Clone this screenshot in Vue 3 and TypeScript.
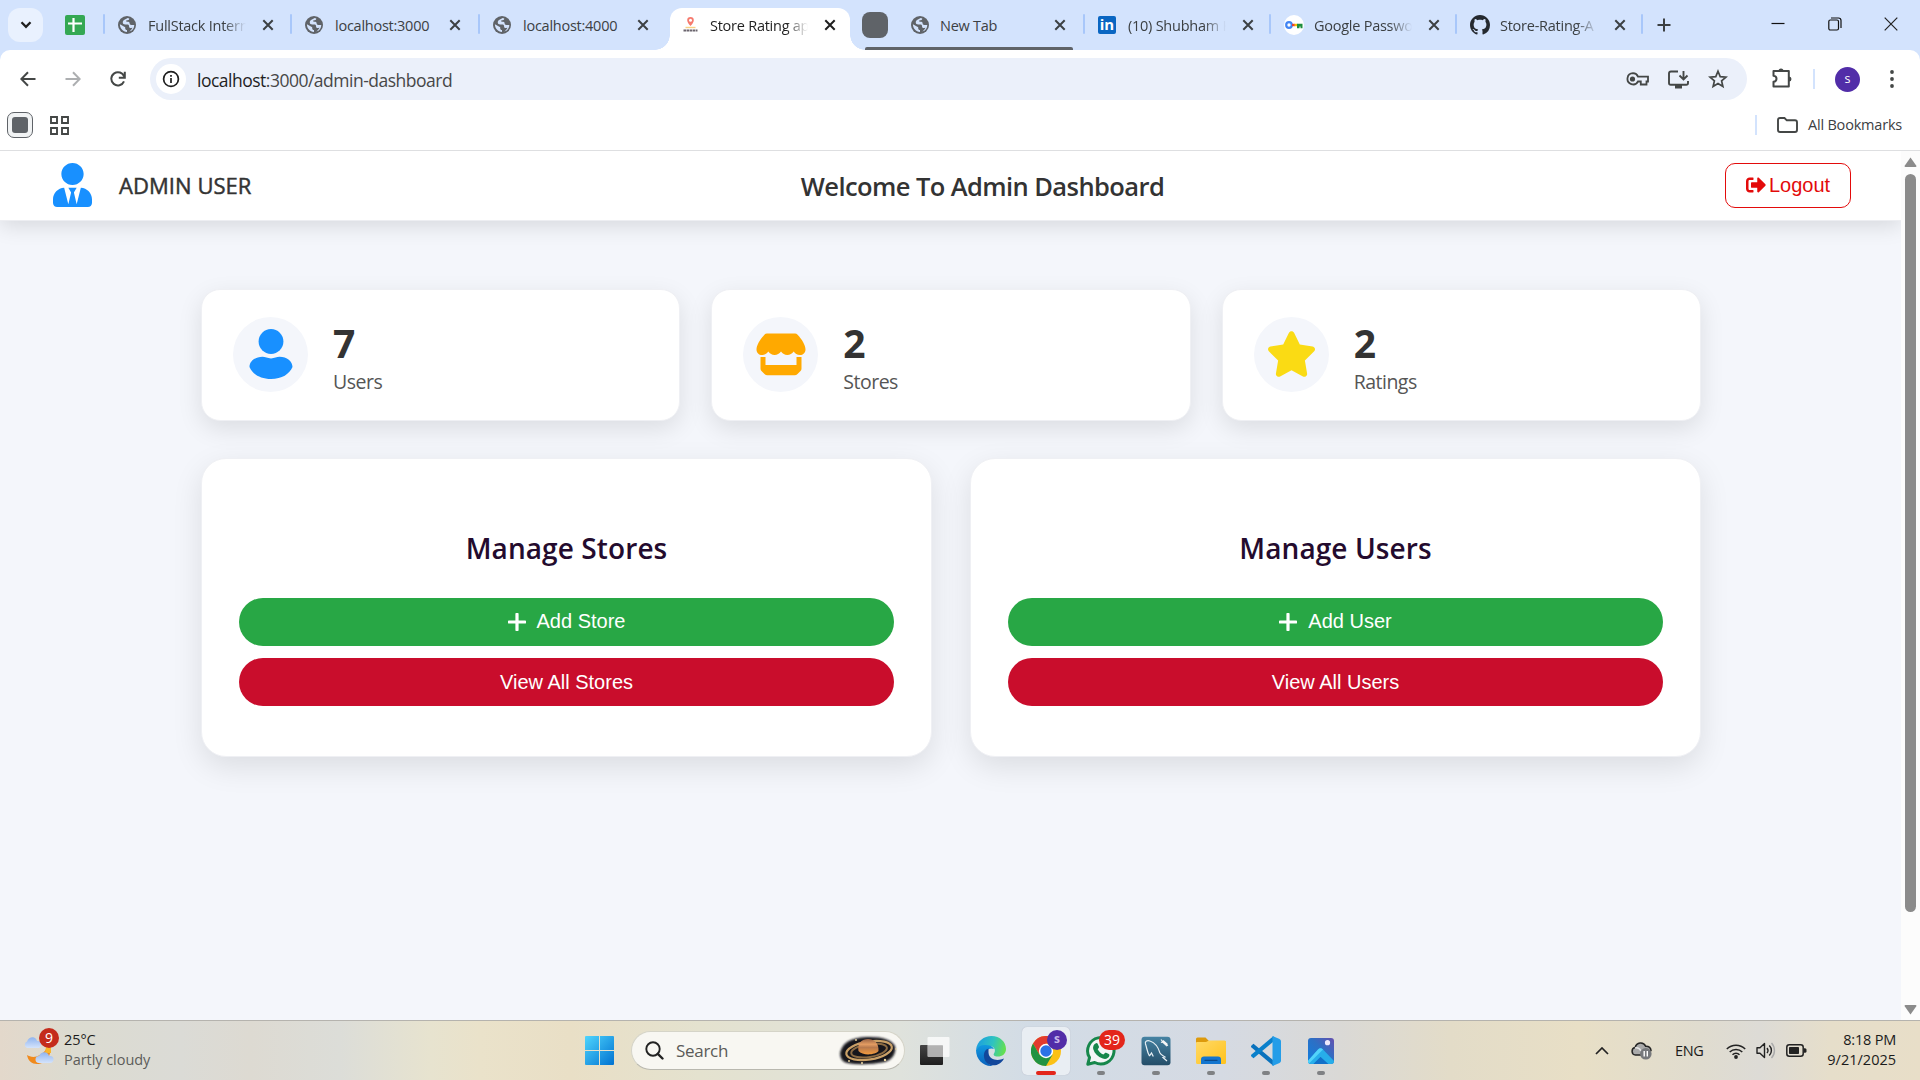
<script setup lang="ts">
type IconKind = 'globe' | 'linkedin' | 'key' | 'github' | 'pin'

interface Tab {
  title: string
  icon: IconKind
  active?: boolean
  chip?: boolean
  faded?: boolean
}

interface Stat {
  kind: 'users' | 'stores' | 'ratings'
  value: number
  label: string
}

interface Panel {
  title: string
  add: string
  view: string
}

const tabs: Tab[] = [
  { title: 'FullStack Intern', icon: 'globe', faded: true },
  { title: 'localhost:3000', icon: 'globe' },
  { title: 'localhost:4000', icon: 'globe' },
  { title: 'Store Rating ap', icon: 'pin', active: true, faded: true },
  { title: 'New Tab', icon: 'globe', chip: true },
  { title: '(10) Shubham K', icon: 'linkedin', faded: true },
  { title: 'Google Passwo', icon: 'key', faded: true },
  { title: 'Store-Rating-A', icon: 'github', faded: true },
]

const stats: Stat[] = [
  { kind: 'users', value: 7, label: 'Users' },
  { kind: 'stores', value: 2, label: 'Stores' },
  { kind: 'ratings', value: 2, label: 'Ratings' },
]

const panels: Panel[] = [
  { title: 'Manage Stores', add: 'Add Store', view: 'View All Stores' },
  { title: 'Manage Users', add: 'Add User', view: 'View All Users' },
]
</script>

<template>
  <div class="screen">
    <div class="tabstrip">
      <div class="cell-start">
        <button class="tab-search">
          <svg width="12" height="8" viewBox="0 0 12 8"><path d="M1.5 1.3 6 5.8l4.500-4.500" fill="none" stroke="#1f1f1f" stroke-width="2.300" /></svg>
        </button>
      </div>
      <div class="pinned">
        <svg width="20" height="20" viewBox="0 0 20 20"><rect width="20" height="20" rx="2" fill="#34a853" /><path d="M8.500 3v14M3 8.500h14" stroke="#fff" stroke-width="2.200" /></svg>
        <i class="sep"></i>
      </div>
      <template v-for="tab in tabs" :key="tab.title">
        <div v-if="tab.chip" class="chip-cell"><span class="chip"></span></div>
        <div class="tab" :class="{ active: tab.active, grouped: tab.chip }">
          <svg v-if="tab.icon === 'globe'" class="fav" viewBox="2 2 20 20"><circle cx="12" cy="12" r="10" fill="#5f6368" /><path d="M4.100 11.200c.1 4.600 3.400 8.300 7.900 8.700v-2.300c-1.200 0-2-.8-2-2v-1zM12.800 4.100l-3.600 2c-1.400.8-2 2-1.900 3.200.1 1.500 1.200 2.200 2.700 2.200h2.200c1.500 0 2.100.7 2.100 2.100 0 1.200.9 1.700 2.100 1.700l1.700-.2c-.7 1.700-2 3.200-3.600 4.100 3.500-.9 5.600-3.800 5.600-7.300h-3.200c-1.400 0-2-.7-2-1.900 0-1.100-.8-1.700-2.100-1.700h-1.500V6.700h1.500c1.100 0 1.700-.8 1.700-1.800z" fill="#d3e3fd" /></svg>
          <svg v-else-if="tab.icon === 'pin'" class="fav" viewBox="0 0 18 18"><path d="M8.500 10C6.500 7.700 5.200 6 5.200 4.200a3.300 3.300 0 0 1 6.600 0C11.800 6 10.500 7.700 8.500 10z" fill="#f67a6e" /><circle cx="8.500" cy="4.200" r="1.500" fill="#fff" /><path d="M3.500 11.500h10" stroke="#f8d184" stroke-width="1.400" /><path d="M1.500 14.500h14" stroke="#6b656e" stroke-width="2" stroke-dasharray="2.600 .5" /></svg>
          <span v-else-if="tab.icon === 'linkedin'" class="fav linkedin">in</span>
          <svg v-else-if="tab.icon === 'key'" class="fav wide" viewBox="0 0 20 20"><circle cx="10" cy="10" r="10" fill="#fff" /><circle cx="5" cy="10" r="2.800" fill="none" stroke="#4285f4" stroke-width="2.200" /><path d="M8 10h3" stroke="#ea4335" stroke-width="2.400" /><path d="M10.500 10h3" stroke="#fbbc04" stroke-width="2.400" /><path d="M13 8.800h5.500v4.500h-2v-1.800h-1v1.800H13z" fill="#1e8e3e" /></svg>
          <svg v-else class="fav wide" viewBox="0 0 16 16"><path fill="#24292f" d="M8 0C3.580 0 0 3.580 0 8c0 3.540 2.290 6.530 5.470 7.590.4.07.55-.17.55-.38 0-.19-.01-.82-.01-1.490-2.010.37-2.530-.49-2.690-.94-.09-.23-.48-.94-.82-1.130-.28-.15-.68-.52-.01-.53.63-.01 1.080.58 1.230.82.72 1.210 1.870.87 2.330.66.07-.52.28-.87.51-1.070-1.780-.2-3.640-.89-3.640-3.950 0-.87.31-1.590.82-2.150-.08-.2-.36-1.020.08-2.120 0 0 .67-.21 2.200.82.64-.18 1.320-.27 2-.27s1.360.09 2 .27c1.530-1.040 2.200-.82 2.200-.82.44 1.100.16 1.920.08 2.120.51.56.82 1.270.82 2.150 0 3.070-1.870 3.750-3.650 3.950.29.25.54.73.54 1.480 0 1.070-.01 1.930-.01 2.200 0 .21.15.46.55.38A8.010 8.010 0 0 0 16 8c0-4.420-3.580-8-8-8z" /></svg>
          <span class="tab-title" :class="{ faded: tab.faded }">{{ tab.title }}</span>
          <svg class="tab-close" width="12" height="12" viewBox="0 0 12 12"><path d="M1.300 1.300l9.400 9.400M10.700 1.300l-9.400 9.400" stroke="currentColor" stroke-width="2" /></svg>
          <i v-if="!tab.active && tab.title !== 'localhost:4000'" class="sep"></i>
        </div>
      </template>
      <div class="new-tab"><svg width="14" height="14" viewBox="0 0 14 14"><path d="M7 .5v13M.5 7h13" stroke="#3c4043" stroke-width="2" /></svg></div>
      <div class="win-controls">
        <svg width="14" height="14" viewBox="0 0 14 14"><path d="M.5 6.500h13" stroke="#111" stroke-width="1.200" /></svg>
        <svg width="14" height="14" viewBox="0 0 14 14"><rect x=".8" y="3" width="9.700" height="10" rx="1.500" fill="none" stroke="#111" stroke-width="1.200" /><path d="M3 1h7.500Q13 1 13 3.500V11" fill="none" stroke="#111" stroke-width="1.200" /></svg>
        <svg width="14" height="14" viewBox="0 0 14 14"><path d="M.7.7l12.600 12.600M13.300.7.7 13.300" stroke="#222" stroke-width="1.200" /></svg>
      </div>
    </div>

    <div class="chrome">
      <div class="toolbar">
        <div class="nav">
          <svg width="16" height="16" viewBox="0 0 16 16"><path d="M15.500 8H1.500M8 1.200 1.300 8 8 14.800" fill="none" stroke="#444746" stroke-width="2" /></svg>
          <svg width="16" height="16" viewBox="0 0 16 16"><path d="M.5 8h14M8 1.200 14.700 8 8 14.800" fill="none" stroke="#adafb1" stroke-width="2" /></svg>
          <svg width="16" height="16" viewBox="0 0 16 16"><path d="M14 10.300A6.600 6.600 0 1 1 14.200 5.800" fill="none" stroke="#444746" stroke-width="2" /><path d="M14.800.8v6h-6" fill="none" stroke="#444746" stroke-width="2" /></svg>
        </div>
        <div class="omnibox">
          <span class="site-info"><svg width="18" height="18" viewBox="0 0 18 18"><circle cx="9" cy="9" r="7.400" fill="none" stroke="#1f1f1f" stroke-width="1.700" /><path d="M9 8v5M9 5v1.800" stroke="#1f1f1f" stroke-width="1.700" /></svg></span>
          <span class="url"><b>localhost</b>:3000/admin-dashboard</span>
          <div class="omni-icons">
            <svg width="23" height="16" viewBox="0 0 23 16"><path d="M7 2.200a5.600 5.600 0 1 0 5 8.300h2.800v3h5.700v-3H22V5.700H12A5.600 5.600 0 0 0 7 2.200z" fill="none" stroke="#444746" stroke-width="1.800" /><circle cx="6.500" cy="8" r="2.600" fill="#444746" /></svg>
            <svg width="21" height="19" viewBox="0 0 21 19"><path d="M10 1.500H3Q1 1.500 1 3.500v9.500q0 1.800 1.800 1.800h15.400q1.800 0 1.800-1.800v-2" fill="none" stroke="#444746" stroke-width="1.900" /><path d="M7 15h7v3.500H7z" fill="#444746" /><path d="M15.500 1v8M11.500 5.500l4 4 4-4" fill="none" stroke="#444746" stroke-width="1.900" /></svg>
            <svg width="20" height="20" viewBox="0 0 20 20"><path d="M10 2.200 12.200 7.600 18 8.100 13.600 11.900 14.900 17.500 10 14.500 5.100 17.500 6.400 11.900 2 8.100 7.800 7.600z" fill="none" stroke="#444746" stroke-width="1.700" /></svg>
          </div>
        </div>
        <svg class="puzzle" width="22" height="22" viewBox="0 0 22 22"><path d="M2.500 4h15.300v15.500H2.500v-4.700c4-.4 4-5.700 0-6.100z" fill="none" stroke="#444746" stroke-width="2" stroke-linejoin="round" /><path d="M7.500 4a2.500 2.500 0 0 1 5 0zM18 9.400a2.500 2.500 0 0 1 0 5z" fill="#444746" /></svg>
        <i class="bar-sep"></i>
        <span class="profile">s</span>
        <svg class="dots" width="4" height="20" viewBox="0 0 4 20"><circle cx="2" cy="3" r="1.900" fill="#444746" /><circle cx="2" cy="10" r="1.900" fill="#444746" /><circle cx="2" cy="17" r="1.900" fill="#444746" /></svg>
      </div>
      <div class="bookmarks">
        <span class="saved-group"><i></i></span>
        <svg class="apps" width="19" height="19" viewBox="0 0 19 19"><path d="M1 1h6v6H1zM12 1h6v6h-6zM1 12h6v6H1zM12 12h6v6h-6z" fill="none" stroke="#444746" stroke-width="1.900" /></svg>
        <i class="bar-sep book-sep"></i>
        <svg width="21" height="16" viewBox="0 0 21 16"><path d="M1 13V3Q1 1 3 1h4.500l2.300 2.300H18q2 0 2 2V13q0 2-2 2H3q-2 0-2-2z" fill="none" stroke="#444746" stroke-width="1.900" /></svg>
        <span class="book-text">All Bookmarks</span>
      </div>
    </div>

    <div class="viewport">
      <div class="page">
        <header class="header">
          <div class="admin">
            <svg width="39" height="44" viewBox="0 0 448 512" preserveAspectRatio="none"><path fill="#1890ff" d="M224 256c70.700 0 128-57.300 128-128S294.700 0 224 0 96 57.300 96 128s57.300 128 128 128zm95.800 32.600L272 480l-32-136 32-56h-96l32 56-32 136-47.800-191.400C56.900 292 0 350.300 0 422.400V464c0 26.500 21.500 48 48 48h352c26.500 0 48-21.500 48-48v-41.600c0-72.100-56.900-130.400-128.200-133.800z" /></svg>
            <span>ADMIN USER</span>
          </div>
          <h1>Welcome To Admin Dashboard</h1>
          <button class="logout">
            <svg width="20" height="20" viewBox="0 0 512 512"><path fill="currentColor" d="M497 273L329 441c-15 15-41 4.500-41-17v-96H152c-13.300 0-24-10.700-24-24v-96c0-13.300 10.700-24 24-24h136V88c0-21.400 25.900-32 41-17l168 168c9.300 9.400 9.300 24.600 0 34zM192 436v-40c0-6.600-5.400-12-12-12H96c-17.700 0-32-14.300-32-32V160c0-17.700 14.300-32 32-32h84c6.600 0 12-5.400 12-12V76c0-6.600-5.400-12-12-12H96c-53 0-96 43-96 96v192c0 53 43 96 96 96h84c6.600 0 12-5.400 12-12z" /></svg>
            <span>Logout</span>
          </button>
        </header>

        <main class="content">
          <section class="stats">
            <article v-for="stat in stats" :key="stat.kind" class="stat">
              <div class="stat-icon">
                <svg v-if="stat.kind === 'users'" width="44" height="50" viewBox="0 0 44 50"><circle cx="22" cy="12.500" r="12.400" fill="#1890ff" /><path d="M13.500 27.800c2.700 0 5 1.600 8.500 1.600s5.800-1.600 8.500-1.600c7.500 0 13 4.500 13 10.200C40.500 45 33 50 22 50S3.500 45 .5 38c0-5.700 5.500-10.200 13-10.200z" fill="#1890ff" /></svg>
                <svg v-else-if="stat.kind === 'stores'" width="50" height="43" viewBox="0 0 50 43"><path d="M11 .5h28q1.500 0 2.600 1.200C46 6.500 49.500 12 49.500 16.500c0 3.500-2.600 5.500-5.500 5.500-3 0-4.700-1.400-6.300-3.400-1.700 2-3.700 3.400-6.400 3.400s-4.600-1.400-6.300-3.400c-1.700 2-3.700 3.400-6.400 3.400s-4.600-1.400-6.300-3.400c-1.600 2-3.400 3.400-6.300 3.400-3 0-5.500-2-5.500-5.500C.5 12 4 6.500 8.400 1.700Q9.500.5 11 .5z" fill="#ffa900" /><path d="M4.500 24h5v8h31v-8h5v11.500q0 1.500-1 2.600l-3 3q-1.200 1.200-2.900 1.200H11.400q-1.700 0-2.900-1.200l-3-3q-1-1.100-1-2.600z" fill="#ffa900" /></svg>
                <svg v-else width="47" height="46" viewBox="24 0 528 512"><path fill="#fadb14" d="M316.900 18C311.600 7 300.400 0 288.100 0s-23.400 7-28.800 18L195 150.300 51.400 171.500c-12 1.800-22 10.200-25.700 21.700s-.7 24.200 7.900 32.700L137.800 329 113.200 474.700c-2 12 3 24.200 12.900 31.300s23 8 33.800 2.300l128.300-68.500 128.300 68.500c10.800 5.700 23.900 4.900 33.800-2.300s14.900-19.300 12.900-31.300L438.500 329 542.700 225.900c8.600-8.500 11.700-21.200 7.900-32.700s-13.700-19.900-25.700-21.700L381.200 150.300 316.900 18z" /></svg>
              </div>
              <div class="stat-text">
                <strong>{{ stat.value }}</strong>
                <span>{{ stat.label }}</span>
              </div>
            </article>
          </section>
          <section class="panels">
            <article v-for="panel in panels" :key="panel.title" class="panel">
              <h2>{{ panel.title }}</h2>
              <button class="action add">
                <svg width="18" height="18" viewBox="0 0 18 18"><path d="M9 1.200v15.600M1.200 9h15.600" stroke="#fff" stroke-width="3.200" stroke-linecap="round" /></svg>
                <span>{{ panel.add }}</span>
              </button>
              <button class="action view">{{ panel.view }}</button>
            </article>
          </section>
        </main>
      </div>
      <div class="scrollbar">
        <svg width="13" height="10" viewBox="0 0 13 10"><path d="M6.500.5 12.500 9Q12.500 10 11.500 10h-10Q.5 10 .5 9z" fill="#8b8b8b" /></svg>
        <div class="thumb"></div>
        <svg class="down" width="13" height="10" viewBox="0 0 13 10"><path d="M6.500 9.500 12.500 1Q12.500 0 11.500 0h-10Q.5 0 .5 1z" fill="#8b8b8b" /></svg>
      </div>
    </div>

    <footer class="taskbar">
      <div class="weather">
        <div class="weather-icon">
          <svg width="32" height="32" viewBox="0 0 32 32">
            <defs><linearGradient id="cloud" x1="0" y1="0" x2="0" y2="1"><stop offset="0" stop-color="#8fb4ef" /><stop offset="1" stop-color="#d4e3fb" /></linearGradient></defs>
            <path d="M26 11c2 8-3 18-13 18-5 0-9-3-10-9 3 2 8 3 13 0s7-6 6-10z" fill="#f08a1d" /><path d="M22 12l5-2v8h-6z" fill="#f9b52b" />
            <path d="M3 13a3.500 3.500 0 0 1 0-6.500C5 1 12 1 13 6c4-1 6 5 2 7z" fill="url(#cloud)" />
            <path d="M15 28a3.500 3.500 0 0 1 0-7c2-5 9-5 10 0 6-1 6 7 1 7z" fill="url(#cloud)" />
          </svg>
          <span class="badge nine">9</span>
        </div>
        <div class="weather-text"><span>25°C</span><span class="muted">Partly cloudy</span></div>
      </div>

      <div class="center">
        <svg class="start" width="29" height="29" viewBox="0 0 29 29"><defs><linearGradient id="win" x1="0" y1="0" x2="1" y2="1"><stop offset="0" stop-color="#4fd5fd" /><stop offset="1" stop-color="#0072d1" /></linearGradient></defs><path d="M1 0h13v14H0V1q0-1 1-1zM15 0h13q1 0 1 1v13H15zM0 15h14v14H1q-1 0-1-1zM15 15h14v13q0 1-1 1H15z" fill="url(#win)" /></svg>
        <div class="search">
          <svg width="19" height="19" viewBox="0 0 19 19"><circle cx="8" cy="8" r="6.700" fill="none" stroke="#222" stroke-width="1.900" /><path d="m12.800 12.800 4.700 4.700" stroke="#222" stroke-width="2.400" stroke-linecap="round" /></svg>
          <span>Search</span>
          <svg class="saturn" width="60" height="31" viewBox="0 0 60 31">
            <defs>
              <filter id="soft" x="-20%" y="-20%" width="140%" height="140%"><feGaussianBlur stdDeviation="1.300" /></filter>
              <linearGradient id="planet" x1="0" y1="0" x2="0" y2="1"><stop offset="0" stop-color="#9a6445" /><stop offset=".35" stop-color="#e39c62" /><stop offset=".55" stop-color="#b87a4e" /><stop offset="1" stop-color="#f29a3e" /></linearGradient>
            </defs>
            <path d="M2 18Q5 3 28 2t29 9q2 11-10 16-22 4-38 1Q2 26 2 18z" fill="#17151c" filter="url(#soft)" />
            <g transform="rotate(-9 31 15)"><ellipse cx="31" cy="15.500" rx="23" ry="9" fill="none" stroke="#c9a067" stroke-width="2.200" /><ellipse cx="31" cy="15.500" rx="18" ry="6.500" fill="none" stroke="#8a6a43" stroke-width="2" /></g>
            <path d="M20.500 16C19 8 24 4 30 4s11 4 10.500 12c-3 4-16 5-20 0z" fill="url(#planet)" />
            <g fill="#f3dda5"><circle cx="11" cy="26" r=".9" /><circle cx="24" cy="28" r="1" /><circle cx="47" cy="25" r="1.200" /><circle cx="58" cy="14" r=".8" /><circle cx="18" cy="5" r=".9" /></g>
          </svg>
        </div>
        <svg class="taskview" width="30" height="28" viewBox="0 0 30 28"><defs><linearGradient id="dark" x1="0" y1="0" x2="0" y2="1"><stop offset="0" stop-color="#454545" /><stop offset="1" stop-color="#1e1e1e" /></linearGradient></defs><rect x="0" y="8" width="23" height="20" rx="1" fill="url(#dark)" /><rect x="7.500" y="0" width="22" height="20" rx="1" fill="#fff" fill-opacity=".75" /><path d="M8 8.500h15V20H8z" fill="#888" fill-opacity=".4" /></svg>

        <div class="app">
          <svg width="30" height="30" viewBox="0 0 30 30">
            <defs><linearGradient id="edgeTop" x1="0" y1=".3" x2="1" y2=".5"><stop offset="0" stop-color="#1b9de2" /><stop offset=".55" stop-color="#2fc3c0" /><stop offset="1" stop-color="#65e04e" /></linearGradient><linearGradient id="edgeLow" x1="0" y1="0" x2="0" y2="1"><stop offset="0" stop-color="#1199e0" /><stop offset="1" stop-color="#0b62bd" /></linearGradient></defs>
            <path d="M0 14C1 5 8 0 15.500 0 24 0 30 6 30 13c0 5-4 7.500-8 7.500-4 0-5-1.500-4-3 2.500-4-.5-7.500-5-7.500C7 9 2 11 0 14z" fill="url(#edgeTop)" />
            <path d="M0 14C2 10 6 8.500 10 9c4 0 6.500 1.500 8 4-5-2-9 2-9 7 0 5 4 9 8 9.800C8 31 0 24 0 14z" fill="url(#edgeLow)" />
            <path d="M12.500 12.500C7 14 6.500 22 10.500 26.500 16 32 25 29 28 22.500c-5 2.500-15 2.500-15.500-6 0-2 0-3 0-4z" fill="#12479b" />
          </svg>
        </div>
        <div class="app current">
          <svg width="30" height="30" viewBox="0 0 30 30"><circle cx="15" cy="15" r="15" fill="#fbc116" /><path d="M2 7.500A15 15 0 0 1 28 7.500H15L8.500 18.750z" fill="#e33b2e" /><path d="M2 7.500A15 15 0 0 0 15 30l6.500-11.250L15 15 8.500 18.750z" fill="#229342" /><circle cx="15" cy="15" r="7.200" fill="#fff" /><circle cx="15" cy="15" r="5.700" fill="#2b72e6" /></svg>
          <span class="badge profile-badge">s</span>
          <i class="mark"></i>
        </div>
        <div class="app">
          <svg width="30" height="30" viewBox="0 0 30 30"><path d="M1.800 28.200l1.700-6.600A13.200 13.200 0 1 1 8.700 26.500z" fill="#f3f6f6" stroke="#16874b" stroke-width="3" stroke-linejoin="round" /><path d="M9.500 7.500q1.500-1 2.300.5l1.200 2.700q.3.700-1.300 2.500c1.400 2.700 3.200 4.200 5.700 5.300 1.700-2 2-2 2.700-1.700l2.700 1.300q1 .6.500 2c-1 2.700-4 3.300-6.500 2.400-5-1.700-8.300-5-9.600-9.500-.6-2.500.8-4.700 2.300-5.500z" fill="#16874b" /></svg>
          <span class="badge count">39</span>
          <i class="mark"></i>
        </div>
        <div class="app">
          <svg width="30" height="30" viewBox="0 0 30 30"><defs><linearGradient id="sql" x1="0" y1="0" x2="0" y2="1"><stop offset="0" stop-color="#4683a3" /><stop offset="1" stop-color="#244d68" /></linearGradient></defs><rect x=".5" y=".8" width="29" height="28.500" rx="3" fill="url(#sql)" /><path d="M8.500 20C6 16 6 12 4.500 8c-1-3 2-4 4.500-3 6 2 8.500 7 10 12 1 2 4 3 5 4l-2 .5 4 3.500M8.500 20l2-3 1.800 3.500" fill="none" stroke="#e8f0f5" stroke-width="1.200" /><path d="m21.500 5 4.500 4" stroke="#f5f5f5" stroke-width="2.600" /><path d="m20 3.500 2 2.500M20 6.500l2.500-1M25 10l2-1" stroke="#f5f5f5" stroke-width="1.200" /></svg>
          <i class="mark"></i>
        </div>
        <div class="app">
          <svg width="30" height="28" viewBox="0 0 30 28"><defs><linearGradient id="fold" x1="0" y1="0" x2="1" y2="1"><stop offset="0" stop-color="#ffd967" /><stop offset="1" stop-color="#ffc21d" /></linearGradient></defs><path d="M0 2q0-1.500 1.500-1.500h8L13 4h15.500Q30 4 30 5.500V8H0z" fill="#dd9a0c" /><path d="M0 6q0-1 1-1h9l3-1.500h15.500Q30 3.500 30 5v20.500q0 1.500-1.500 1.500h-27Q0 27 0 25.500z" fill="url(#fold)" /><path d="M5 27v-4.500Q5 19.500 8 19.500h14q3 0 3 3V27z" fill="#1375cf" /><path d="M9 23.300h12" stroke="#0b4a8b" stroke-width="1.300" stroke-linecap="round" /></svg>
          <i class="mark"></i>
        </div>
        <div class="app">
          <svg width="30" height="30" viewBox="0 0 30 30"><path d="m2.500 7.800 20 16.700V30L.5 11.500q-1-1 0-2z" fill="#0a72bd" /><path d="m2.500 22.200 20-16.700V0L.5 18.500q-1 1 0 2z" fill="#0a80cb" /><path d="M21.500 0l7 3q1.500.7 1.500 2.300v19.400q0 1.600-1.500 2.300l-7 3z" fill="#249de8" /></svg>
          <i class="mark"></i>
        </div>
        <div class="app">
          <svg width="26" height="26" viewBox="0 0 26 26"><defs><linearGradient id="pic" x1="0" y1="1" x2="1" y2="0"><stop offset="0" stop-color="#0f7ee0" /><stop offset=".55" stop-color="#2c70c5" /><stop offset="1" stop-color="#6650ae" /></linearGradient><clipPath id="picClip"><rect width="26" height="26" rx="3" /></clipPath></defs><g clip-path="url(#picClip)"><rect width="26" height="26" fill="url(#pic)" /><path d="M-1 24 10 11.500q2.500-2.500 5 0L27 24v3l-6.500 0-8-8-8 8H-1z" fill="#27aeea" /><path d="M-1 24 10 11.500q2.500-2.500 5 0l-15 15z" fill="#53d3fa" /><path d="m12.500 19 9 8h-17z" fill="#1270c9" /></g><circle cx="19.500" cy="4.700" r="2.600" fill="#eee9fb" /></svg>
          <i class="mark"></i>
        </div>
      </div>

      <div class="tray">
        <svg width="14" height="8" viewBox="0 0 14 8"><path d="m1 7 6-6 6 6" fill="none" stroke="#222" stroke-width="1.700" /></svg>
        <svg class="onedrive" width="21" height="19" viewBox="0 0 21 19"><path d="M4.500 14a3.800 3.800 0 0 1-.4-7.500C5.500 1 12.500.3 14.600 5.200 18 5 20 7 20 9.500L13 14z" fill="#aaa" stroke="#252525" stroke-width="1.500" /><path d="M4 7q4-1 6 3" fill="none" stroke="#e6e6e6" stroke-width="1.500" /><circle cx="14.800" cy="12.800" r="5.800" fill="#77797c" /><path d="M13.200 10v5.600M16.300 10v5.600" stroke="#fff" stroke-width="1.400" /></svg>
        <span class="lang">ENG</span>
        <svg class="wifi" width="20" height="16" viewBox="0 0 20 16"><path d="M.8 6a13 13 0 0 1 18.400 0M3.700 9a9 9 0 0 1 12.600 0M6.500 11.800a5 5 0 0 1 7 0" fill="none" stroke="#222" stroke-width="1.500" /><circle cx="10" cy="14" r="1.900" fill="#222" /></svg>
        <svg class="sound" width="20" height="17" viewBox="0 0 20 17"><path d="M1 5.800h3L8.500 1.500v14L4 11.200H1z" fill="none" stroke="#222" stroke-width="1.400" stroke-linejoin="round" /><path d="M11 6a4 4 0 0 1 0 5M13.300 3.500a7 7 0 0 1 0 10" fill="none" stroke="#222" stroke-width="1.400" /><path d="M15.500 1a11 11 0 0 1 0 15" fill="none" stroke="#aaa" stroke-width="1.400" /></svg>
        <svg class="battery" width="21" height="13" viewBox="0 0 21 13"><rect x=".8" y=".8" width="16.400" height="11.400" rx="2.500" fill="none" stroke="#222" stroke-width="1.500" /><rect x="3" y="3" width="10" height="7" rx=".8" fill="#222" /><path d="M18 4.200h1q1.500 0 1.500 1.500v1.600q0 1.500-1.500 1.500h-1z" fill="#222" /></svg>
        <div class="clock"><span>8:18 PM</span><span class="date">9/21/2025</span></div>
      </div>
    </footer>
  </div>
</template>

<style>
body {
  margin: 0;
  overflow: hidden;
}
</style>

<style scoped>
* {
  box-sizing: border-box;
}
svg {
  display: block;
  flex: none;
}
button {
  margin: 0;
  padding: 0;
  border: 0;
}
.screen {
  width: 1920px;
  height: 1080px;
  display: flex;
  flex-direction: column;
  overflow: hidden;
  background: #d3e3fd;
  font-family: "Open Sans", "Noto Sans", sans-serif;
}

/* Tab strip */
.tabstrip {
  height: 50px;
  flex: none;
  display: grid;
  grid-template-columns: 57px 49px 187px 188px 189px 180px 48px 188px 186px 186px 186px 40px 1fr;
}
.cell-start {
  padding: 8px 0 0 8px;
}
.tab-search {
  width: 35px;
  height: 34px;
  border-radius: 12px;
  background: #e9f1fe;
  display: flex;
  align-items: center;
  justify-content: center;
}
.pinned {
  display: flex;
  align-items: center;
  padding-left: 8px;
}
.sep {
  width: 2px;
  height: 20px;
  margin: 0 1px 2px auto;
  border-radius: 1px;
  background: #a8c7fa;
}
.tab {
  position: relative;
  display: flex;
  align-items: center;
  padding-left: 12px;
  color: #3c4043;
}
.fav {
  width: 18px;
  height: 18px;
  margin-right: 12px;
}
.fav.wide {
  width: 20px;
  height: 20px;
  margin-right: 10px;
}
.linkedin {
  background: #0a66c2;
  border-radius: 2px;
  color: #fff;
  font-size: 15px;
  line-height: 17px;
  font-weight: 700;
  text-align: center;
  flex: none;
}
.tab-title {
  width: 100px;
  flex: none;
  padding-top: 2px;
  white-space: nowrap;
  font-size: 14.5px;
  letter-spacing: -0.25px;
  line-height: 20px;
}
.tab-title.faded {
  overflow: hidden;
  -webkit-mask-image: linear-gradient(90deg, #000 76%, transparent 98%);
  mask-image: linear-gradient(90deg, #000 76%, transparent 98%);
}
.tab-close {
  margin-left: 13.5px;
}
.tab.active {
  height: 42px;
  align-self: end;
  padding-bottom: 8px;
  background: #fff;
  border-radius: 12px 12px 0 0;
  color: #1f1f1f;
}
.tab.active .fav {
  margin-right: 10px;
}
.tab.active .tab-close {
  margin-left: 14px;
}
.tab.active::before,
.tab.active::after {
  content: "";
  position: absolute;
  bottom: 0;
  width: 15px;
  height: 15px;
}
.tab.active::before {
  left: -15px;
  background: radial-gradient(circle at 0 0, transparent 14.5px, #fff 15px);
}
.tab.active::after {
  right: -15px;
  background: radial-gradient(circle at 100% 0, transparent 14.5px, #fff 15px);
}
.chip-cell {
  padding: 12px 0 0 12px;
}
.chip {
  display: block;
  width: 26px;
  height: 26px;
  border-radius: 8px;
  background: #5f6368;
}
.tab.grouped {
  padding-left: 13px;
}
.tab.grouped .fav {
  margin-right: 11px;
}
.tab.grouped::after {
  content: "";
  position: absolute;
  left: -33px;
  bottom: 0;
  width: 208px;
  height: 3px;
  border-radius: 2px 2px 0 0;
  background: #5f6368;
}
.new-tab {
  display: flex;
  align-items: center;
  justify-content: center;
}
.win-controls {
  display: flex;
  justify-content: flex-end;
  align-items: center;
  gap: 42.5px;
  padding: 0 22px 2px 0;
}

/* Toolbar */
.chrome {
  height: 101px;
  flex: none;
  background: #fff;
  border-bottom: 1px solid #dedfe1;
  border-radius: 10px 10px 0 0;
}
.toolbar {
  height: 50px;
  padding-top: 8px;
  display: flex;
  align-items: center;
}
.nav {
  width: 150px;
  padding-left: 20px;
  display: flex;
  gap: 29px;
}
.omnibox {
  width: 1597px;
  height: 42px;
  border-radius: 21px;
  background: #ebf0fa;
  display: flex;
  align-items: center;
  padding-left: 6px;
}
.site-info {
  width: 30px;
  height: 30px;
  border-radius: 50%;
  background: #fff;
  display: flex;
  align-items: center;
  justify-content: center;
  margin-right: 11px;
}
.url {
  font-size: 17.5px;
  line-height: 24px;
  letter-spacing: -0.5px;
  padding-top: 1px;
  color: #474747;
}
.url b {
  color: #1f1f1f;
  font-weight: 400;
}
.omni-icons {
  margin-left: auto;
  padding-right: 19px;
  display: flex;
  align-items: center;
  gap: 19px;
}
.puzzle {
  margin: -2px 0 0 24px;
}
.bar-sep {
  width: 2px;
  height: 20px;
  background: #d3e3fd;
  margin-left: 20px;
}
.profile {
  width: 25px;
  height: 25px;
  margin-left: 20px;
  border-radius: 50%;
  background: #512da8;
  color: #fff;
  font-size: 12.5px;
  line-height: 23px;
  text-align: center;
}
.dots {
  margin-left: 30px;
}
.bookmarks {
  height: 50px;
  display: flex;
  align-items: center;
  padding: 0 18px 0 7px;
}
.saved-group {
  width: 26px;
  height: 26px;
  border: 1.5px solid #5f6368;
  border-radius: 7px;
  background: #f1f3f4;
  display: flex;
  align-items: center;
  justify-content: center;
}
.saved-group i {
  width: 16px;
  height: 16px;
  border-radius: 3px;
  background: #5f6368;
}
.apps {
  margin-left: 17px;
}
.book-sep {
  margin: 0 20px 0 auto;
}
.book-text {
  width: 94px;
  margin-left: 10px;
  padding-bottom: 1px;
  font-size: 14.5px;
  letter-spacing: -0.2px;
  color: #3c4043;
  white-space: nowrap;
}

/* Web page */
.viewport {
  height: 869px;
  flex: none;
  display: flex;
}
.page {
  width: 1901px;
  background: #f4f6fb;
  overflow: hidden;
}
.header {
  height: 70px;
  padding: 0 50px 1px 53px;
  display: grid;
  grid-template-columns: 1fr auto 1fr;
  align-items: center;
  background: #fff;
  border-bottom: 1px solid #edeef2;
  box-shadow: 0 5px 20px rgba(0, 0, 0, 0.12);
}
.admin {
  display: flex;
  align-items: center;
  gap: 27px;
  font-size: 22px;
  letter-spacing: 0.05px;
  color: #333;
  -webkit-text-stroke: 0.45px #333;
}
h1 {
  margin: 2px 0 0 61px;
  font-size: 25.5px;
  line-height: 34px;
  font-weight: 600;
  letter-spacing: -0.58px;
  color: #333;
  white-space: nowrap;
}
.logout {
  justify-self: end;
  width: 126px;
  height: 45px;
  border: 1px solid #e30b0b;
  border-radius: 10px;
  background: #fff;
  color: #e30b0b;
  display: flex;
  align-items: center;
  justify-content: center;
  gap: 3px;
  font: 20px "Liberation Sans", Arial, sans-serif;
}
.content {
  width: 1500px;
  margin: 68px 0 0 201px;
  display: flex;
  flex-direction: column;
  gap: 37px;
}
.stats {
  display: grid;
  grid-template-columns: repeat(3, 1fr);
  gap: 31px;
}
.stat {
  height: 132px;
  padding: 0 31px 2px;
  display: flex;
  align-items: center;
  gap: 25px;
  border-radius: 19px;
  background: #fff;
  border: 1px solid #eff0f4;
  box-shadow: 0 8px 25px rgba(0, 0, 0, 0.1);
}
.stat-icon {
  width: 75px;
  height: 75px;
  border-radius: 50%;
  background: #f4f6fb;
  display: flex;
  align-items: center;
  justify-content: center;
}
.stat-text {
  display: flex;
  flex-direction: column;
  padding-top: 10px;
}
.stat-text strong {
  font-size: 39px;
  line-height: 45px;
  font-weight: 700;
  color: #333;
}
.stat-text span {
  font-size: 19.5px;
  line-height: 33px;
  letter-spacing: -0.5px;
  color: #555;
}
.panels {
  display: grid;
  grid-template-columns: 1fr 1fr;
  gap: 38px;
}
.panel {
  height: 299px;
  padding: 68px 37px 0;
  border-radius: 25px;
  border: 1px solid #eff0f4;
  background: #fff;
  box-shadow: 0 10px 30px rgba(0, 0, 0, 0.1);
}
.panel h2 {
  margin: 0 0 28px;
  font-size: 28px;
  line-height: 43px;
  font-weight: 600;
  letter-spacing: 0.1px;
  text-align: center;
  color: #240b2e;
}
.action {
  width: 100%;
  height: 48px;
  border-radius: 24px;
  color: #fff;
  display: flex;
  align-items: center;
  justify-content: center;
  font: 20px "Liberation Sans", Arial, sans-serif;
}
.action span {
  padding-bottom: 2px;
}
.add {
  gap: 11px;
  background: #28a745;
}
.view {
  margin-top: 12px;
  background: #c90d2c;
}
.scrollbar {
  width: 19px;
  background: #fcfcfc;
  display: flex;
  flex-direction: column;
  align-items: center;
  padding: 6px 0 5px;
}
.thumb {
  width: 11px;
  height: 738px;
  margin-top: 7px;
  border-radius: 6px;
  background: #8b8b8b;
}
.down {
  margin-top: auto;
}

/* Taskbar */
.taskbar {
  height: 60px;
  flex: none;
  border-top: 1px solid #b5b3ae;
  display: flex;
  align-items: center;
  color: #1b1b1b;
  background: linear-gradient(90deg, #e3d8cb 0, #dcdbd0 70px, #dbdbd6 180px, #dddad2 250px, #dcddd8 340px, #e7e3cf 430px, #eae2ca 480px, #e9dfc6 570px, #e4e2cf 700px, #dfe2dc 900px, #d2dce6 1030px, #d5dae3 1220px, #dad9d6 1340px, #e3dcc8 1450px, #e8dfc6 1580px, #e0dccf 1700px, #dddbd6 1760px, #e6deca 1830px, #e8dec8 1920px);
}
.weather {
  width: 585px;
  display: flex;
  align-items: center;
  padding-left: 24px;
}
.weather-icon {
  position: relative;
  width: 40px;
}
.badge {
  position: absolute;
  color: #fff;
  background: #e3261b;
  text-align: center;
}
.nine {
  left: 15px;
  top: -7px;
  width: 20px;
  height: 20px;
  border-radius: 10px;
  background: #c42b1c;
  font-size: 14px;
  line-height: 20px;
}
.weather-text {
  display: flex;
  flex-direction: column;
  padding-bottom: 2px;
  font-size: 14.5px;
  line-height: 20px;
  letter-spacing: -0.1px;
}
.muted {
  color: #5d5d5a;
  letter-spacing: -0.05px;
}
.center {
  display: flex;
  align-items: center;
}
.search {
  width: 274px;
  height: 39px;
  margin-left: 17px;
  border: 1px solid #d5d4c8;
  border-bottom-color: #b9b8af;
  border-radius: 20px;
  background: #f8f7f2;
  display: flex;
  align-items: center;
  padding: 0 6px 0 13px;
  font-size: 17px;
  letter-spacing: -0.3px;
  color: #5b5b58;
}
.search span {
  margin-left: 12px;
}
.saturn {
  margin-left: auto;
}
.taskview {
  margin: 0 13px 0 15px;
}
.app {
  position: relative;
  width: 48px;
  height: 48px;
  margin-right: 7px;
  display: flex;
  align-items: center;
  justify-content: center;
}
.center .app:nth-of-type(2) {
  margin-left: 4px;
}
.current {
  border-radius: 5px;
  background: #e9eef3;
  box-shadow: 0 0 1px #aab;
}
.mark {
  position: absolute;
  left: 20px;
  bottom: 0;
  width: 8px;
  height: 4px;
  border-radius: 2px;
  background: #7f8184;
}
.current .mark {
  left: 14px;
  width: 20px;
  background: #e3261b;
}
.profile-badge {
  left: 25px;
  top: 3px;
  width: 20px;
  height: 20px;
  border-radius: 50%;
  background: #512da8;
  color: #c6b7ea;
  font-size: 12px;
  font-weight: 700;
  line-height: 18px;
}
.count {
  left: 22px;
  top: 3px;
  width: 26px;
  height: 20px;
  border-radius: 10px;
  font-size: 14px;
  line-height: 19px;
}
.tray {
  margin-left: auto;
  display: flex;
  align-items: center;
  padding-right: 24px;
}
.onedrive {
  margin-left: 22px;
}
.lang {
  width: 30px;
  margin-left: 23px;
  padding-bottom: 1px;
  font-size: 14.5px;
  letter-spacing: -0.3px;
}
.wifi {
  margin-left: 21px;
}
.sound {
  margin-left: 10px;
}
.battery {
  margin-left: 10px;
}
.clock {
  width: 89px;
  display: flex;
  flex-direction: column;
  align-items: flex-end;
  padding-bottom: 2px;
  font-size: 14.5px;
  line-height: 20px;
  letter-spacing: -0.2px;
}
.date {
  letter-spacing: 0;
}
</style>
